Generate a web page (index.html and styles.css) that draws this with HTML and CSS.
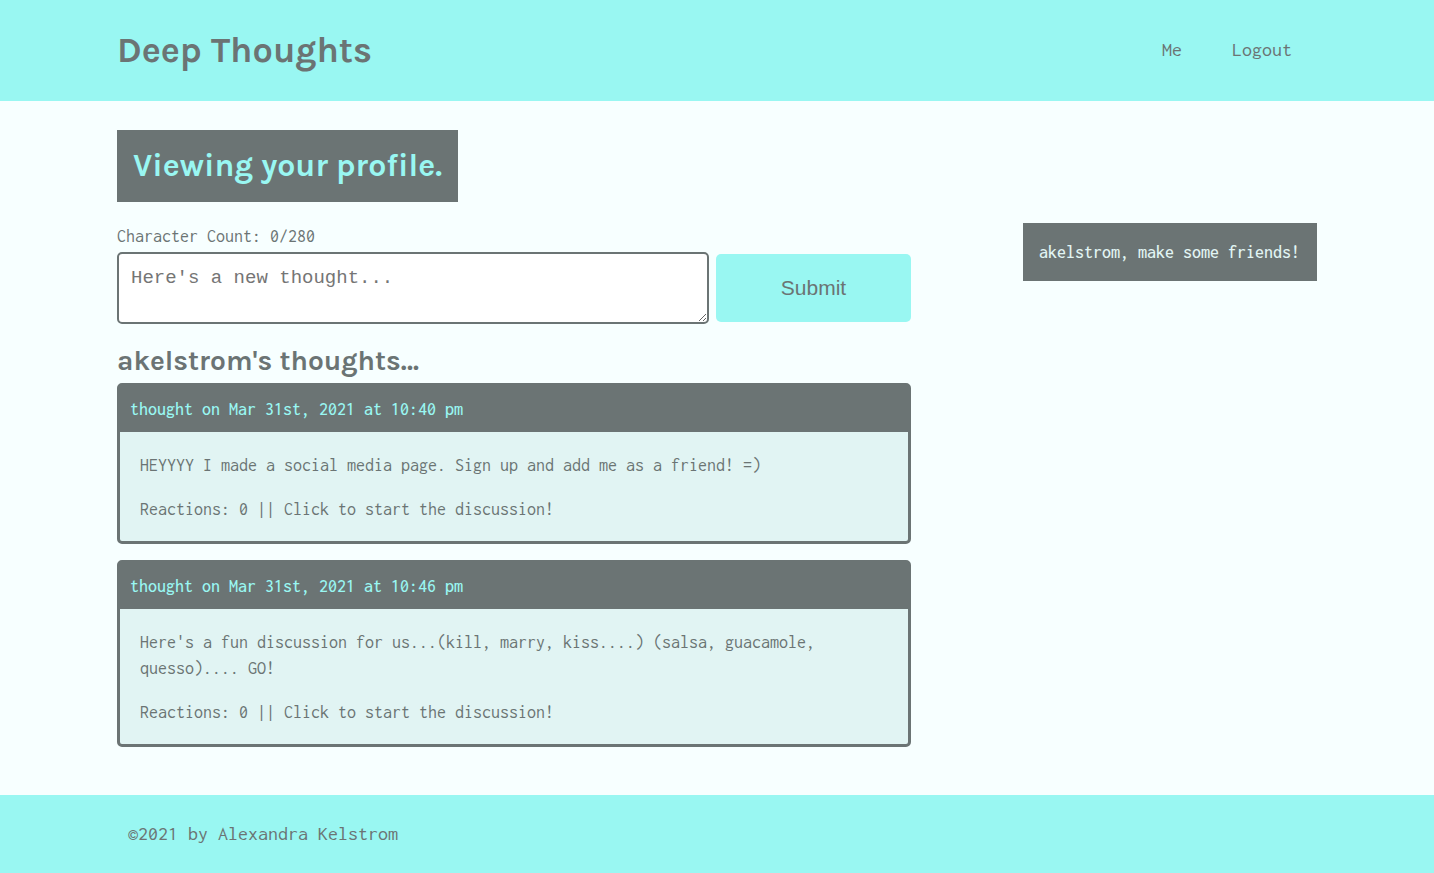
FILE: index.html
```html
<!DOCTYPE html>
<html lang="en">
<head>
<meta charset="utf-8">
<meta name="viewport" content="width=device-width, initial-scale=1">
<title>Deep Thoughts</title>
<link rel="stylesheet" href="styles.css">
</head>
<body>
<header class="site-header">
  <div class="container header-row">
    <h1 class="brand"><a href="#">Deep Thoughts</a></h1>
    <nav class="site-nav">
      <a href="#">Me</a>
      <a href="#">Logout</a>
    </nav>
  </div>
</header>
<main class="container page">
  <h2 class="page-title">Viewing your profile.</h2>
  <div class="columns">
    <div class="feed">
      <label class="count" for="thought">Character Count: 0/280</label>
      <form class="thought-form">
        <textarea class="thought-input" id="thought" placeholder="Here's a new thought..."></textarea>
        <button class="submit" type="submit">Submit</button>
      </form>
      <h3 class="feed-title">akelstrom's thoughts...</h3>
      <article class="card">
        <p class="card-header">thought on Mar 31st, 2021 at 10:40 pm</p>
        <a class="card-body" href="#">
          <p>HEYYYY I made a social media page. Sign up and add me as a friend! =)</p>
          <p>Reactions: 0 || Click to start the discussion!</p>
        </a>
      </article>
      <article class="card">
        <p class="card-header">thought on Mar 31st, 2021 at 10:46 pm</p>
        <a class="card-body" href="#">
          <p>Here's a fun discussion for us...(kill, marry, kiss....) (salsa, guacamole, quesso).... GO!</p>
          <p>Reactions: 0 || Click to start the discussion!</p>
        </a>
      </article>
    </div>
    <aside class="friends">
      <p>akelstrom, make some friends!</p>
    </aside>
  </div>
</main>
<footer class="site-footer">
  <div class="container footer-text">©2021 by Alexandra Kelstrom</div>
</footer>
</body>
</html>
```
FILE: styles.css
```css
:root {
  --aqua: #99f7f2;
  --slate: #6b7474;
  --pale: #e1f4f3;
  --page: #f7ffff;
  --heading: Karla, Roboto, sans-serif;
  --mono: Inconsolata, "DejaVu Sans Mono", monospace;
}

* {
  box-sizing: border-box;
}

body {
  margin: 0;
  min-height: 100vh;
  display: flex;
  flex-direction: column;
  background: var(--page);
  color: var(--slate);
  font-family: var(--mono);
  font-size: 18px;
  line-height: 26px;
}

h1, h2, h3, p {
  margin: 0;
}

h1, h2, h3 {
  font-family: var(--heading);
  font-weight: 700;
}

a {
  color: inherit;
  text-decoration: none;
}

.container {
  width: 100%;
  max-width: 1200px;
  margin: 0 auto;
}

.site-header {
  background: var(--aqua);
  padding: 24px 0 25px;
}

.header-row {
  display: flex;
  align-items: center;
  justify-content: space-between;
}

.brand {
  font-size: 36px;
  line-height: 52px;
}

.site-nav {
  display: flex;
  gap: 50px;
  padding-right: 25px;
  font-size: 20px;
}

.page {
  flex: 1;
  padding: 29px 0 48px;
}

.page-title {
  width: fit-content;
  padding: 16px;
  margin-bottom: 21px;
  background: var(--slate);
  color: var(--aqua);
  font-size: 32px;
  line-height: 40px;
}

.columns {
  display: grid;
  grid-template-columns: 794fr 294fr;
  column-gap: 112px;
  align-items: start;
}

.count {
  display: block;
  padding-bottom: 3px;
}

.thought-form {
  display: grid;
  grid-template-columns: 592fr 195fr;
  column-gap: 7px;
  align-items: center;
}

.thought-input {
  display: block;
  width: 100%;
  height: 72px;
  padding: 12px;
  border: 2px solid var(--slate);
  border-radius: 5px;
  background: #fff;
  color: var(--slate);
  font-family: "Courier New", "Liberation Mono", monospace;
  font-size: 19px;
  line-height: 24px;
}

.thought-input::placeholder {
  color: #757575;
}

.submit {
  height: 68px;
  border: 0;
  border-radius: 5px;
  background: var(--aqua);
  color: var(--slate);
  font-family: Arial, "Liberation Sans", sans-serif;
  font-size: 21px;
}

.feed-title {
  margin-top: 18px;
  padding-bottom: 3px;
  font-size: 28px;
  line-height: 38px;
}

.card {
  border: 3px solid var(--slate);
  border-radius: 5px;
  background: var(--pale);
}

.card + .card {
  margin-top: 16px;
}

.card-header {
  padding: 10px;
  background: var(--slate);
  color: var(--aqua);
  font-weight: 500;
}

.card-body {
  display: flex;
  flex-direction: column;
  gap: 18px;
  padding: 20px 20px 19px;
}

.friends {
  padding: 16px;
  background: var(--slate);
  color: var(--pale);
  font-weight: 500;
  white-space: nowrap;
}

.site-footer {
  background: var(--aqua);
  padding: 26px 0;
  font-size: 20px;
}

.footer-text {
  padding: 0 11px;
}

@media (max-width: 1200px) {
  .container {
    padding-left: 16px;
    padding-right: 16px;
  }
}

@media (max-width: 900px) {
  .columns {
    grid-template-columns: 1fr;
    row-gap: 24px;
  }

  .friends {
    white-space: normal;
  }
}
```
